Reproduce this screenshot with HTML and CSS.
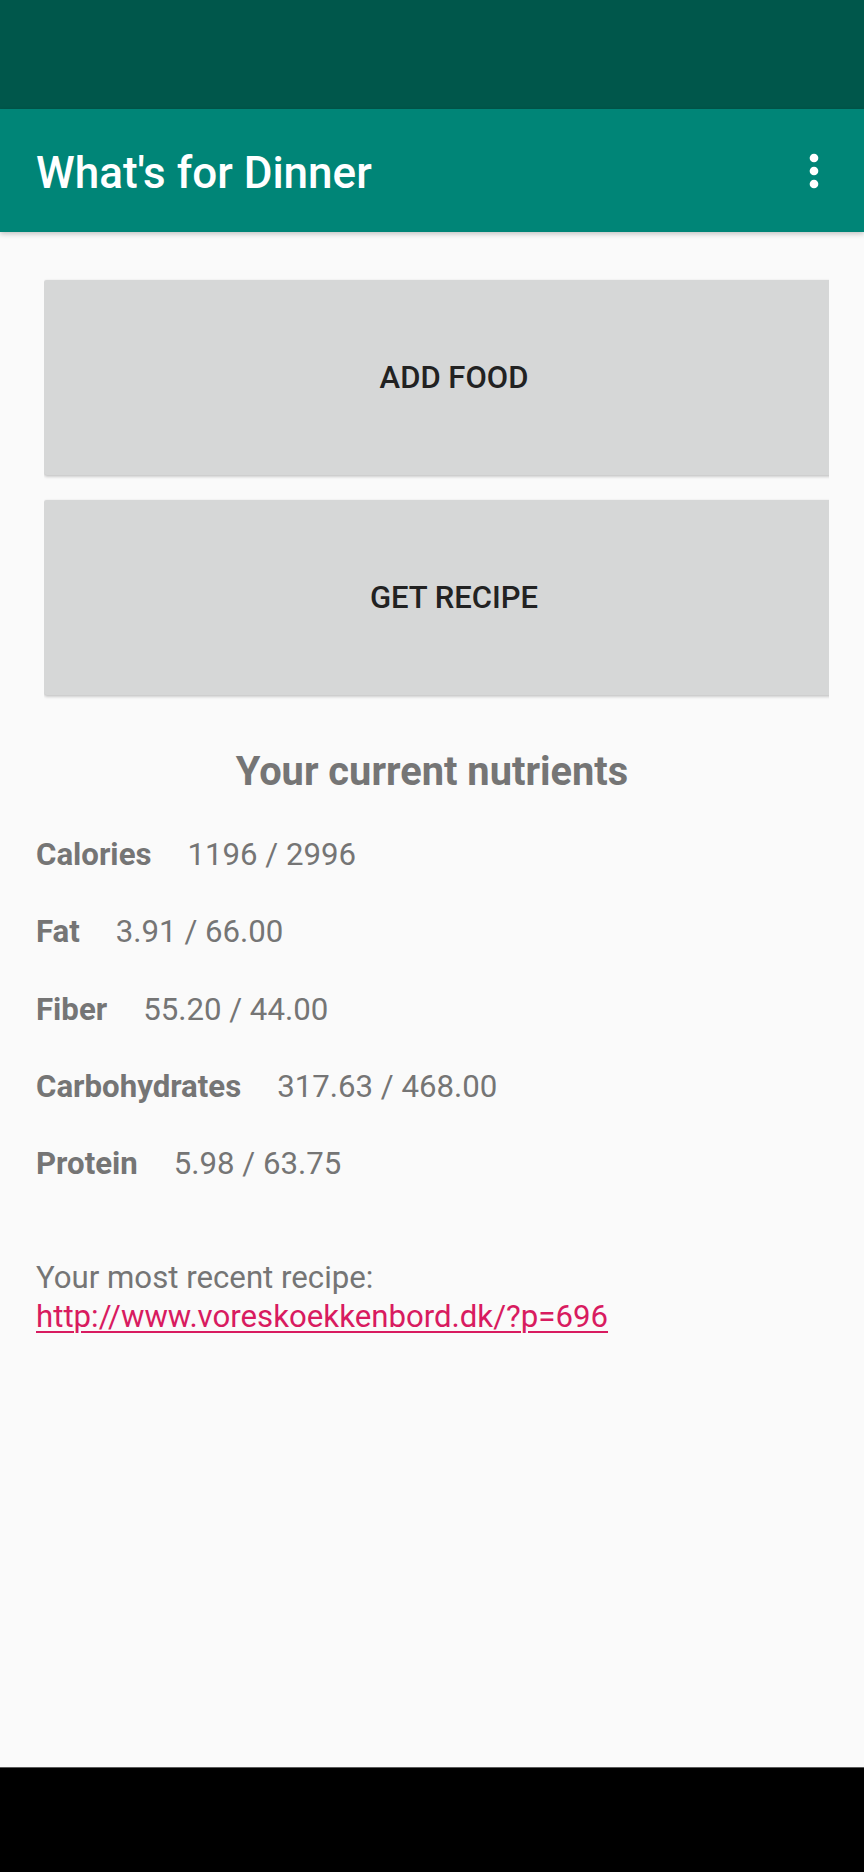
FILE: index.html
```html
<!DOCTYPE html>
<html lang="en">
<head>
<meta charset="utf-8">
<title>What's for Dinner</title>
<link rel="stylesheet" href="styles.css">
</head>
<body>
<div class="screen">
  <div class="status-bar"></div>
  <header class="app-bar">
    <h1 class="app-title">What's for Dinner</h1>
    <svg class="overflow-icon" viewBox="0 0 24 24" width="52" height="52" aria-hidden="true">
      <circle cx="12" cy="6" r="2" fill="#fff"/>
      <circle cx="12" cy="12" r="2" fill="#fff"/>
      <circle cx="12" cy="18" r="2" fill="#fff"/>
    </svg>
  </header>
  <main class="content">
    <div class="buttons">
      <div class="btn-clip"><button class="action-btn">ADD FOOD</button></div>
      <div class="btn-clip"><button class="action-btn">GET RECIPE</button></div>
    </div>
    <h2 class="nutrients-title">Your current nutrients</h2>
    <ul class="nutrients">
      <li class="nutrient"><span class="n-label">Calories</span><span class="n-value">1196 / 2996</span></li>
      <li class="nutrient"><span class="n-label">Fat</span><span class="n-value">3.91 / 66.00</span></li>
      <li class="nutrient"><span class="n-label">Fiber</span><span class="n-value">55.20 / 44.00</span></li>
      <li class="nutrient"><span class="n-label">Carbohydrates</span><span class="n-value">317.63 / 468.00</span></li>
      <li class="nutrient"><span class="n-label">Protein</span><span class="n-value">5.98 / 63.75</span></li>
    </ul>
    <div class="recipe">
      <p class="recipe-label">Your most recent recipe:</p>
      <a class="recipe-link" href="#">http://www.voreskoekkenbord.dk/?p=696</a>
    </div>
  </main>
  <div class="nav-bar"></div>
</div>
</body>
</html>
```
FILE: styles.css
```css
* { box-sizing: border-box; }
html, body {
  margin: 0;
  padding: 0;
  background: #fafafa;
}
body {
  font-family: Roboto, "Noto Sans", sans-serif;
}
.screen {
  display: flex;
  flex-direction: column;
  height: 1872px;
  width: 864px;
  overflow: hidden;
}
.status-bar {
  height: 109px;
  background: #00574b;
  flex: none;
}
.app-bar {
  height: 123px;
  flex: none;
  background: #008577;
  display: flex;
  align-items: center;
  justify-content: space-between;
  padding: 4px 24px 0 36px;
  box-shadow: 0 2px 5px rgba(0, 0, 0, 0.22);
  position: relative;
  z-index: 2;
}
.app-title {
  margin: 0;
  color: #fff;
  font-size: 44px;
  font-weight: 500;
}
.overflow-icon {
  display: block;
  margin-top: -4px;
}
.content {
  flex: 1;
  display: flex;
  flex-direction: column;
  padding: 48px 35px 0 36px;
}
.buttons {
  display: flex;
  flex-direction: column;
  gap: 25px;
  padding-left: 8px;
}
.btn-clip {
  overflow-x: clip;
  overflow-y: visible;
  overflow-clip-margin: 6px;
  clip-path: inset(-6px 0 -6px -6px);
}
.action-btn {
  display: block;
  width: calc(100% + 35px);
  height: 195px;
  border: none;
  border-radius: 3px;
  background: #d6d7d7;
  color: #222;
  font-family: Roboto, sans-serif;
  font-size: 31px;
  font-weight: 500;
  letter-spacing: 0;
  padding: 0;
  box-shadow: 0 2px 3px rgba(0, 0, 0, 0.18), 0 0 2px rgba(0, 0, 0, 0.1);
}
.nutrients-title {
  margin: 53px -35px 0 -36px;
  text-align: center;
  font-size: 39.8px;
  font-weight: 700;
  color: #757575;
  line-height: normal;
}
.nutrients {
  list-style: none;
  margin: 21px 0 0 0;
  padding: 0;
}
.nutrient {
  display: flex;
  line-height: 77.3px;
  font-size: 31.2px;
  color: #757575;
}
.n-label {
  font-weight: 700;
}
.n-value {
  margin-left: 36px;
}
.recipe {
  margin-top: 56px;
  font-size: 31.2px;
  line-height: 39px;
}
.recipe-label {
  margin: 0;
  color: #757575;
}
.recipe-link {
  color: #d81b60;
  text-decoration: underline;
  text-underline-offset: 4px;
  text-decoration-thickness: 2px;
}
.nav-bar {
  height: 105px;
  flex: none;
  background: #000;
  border-top: 1px solid #5a5a5a;
}
```
